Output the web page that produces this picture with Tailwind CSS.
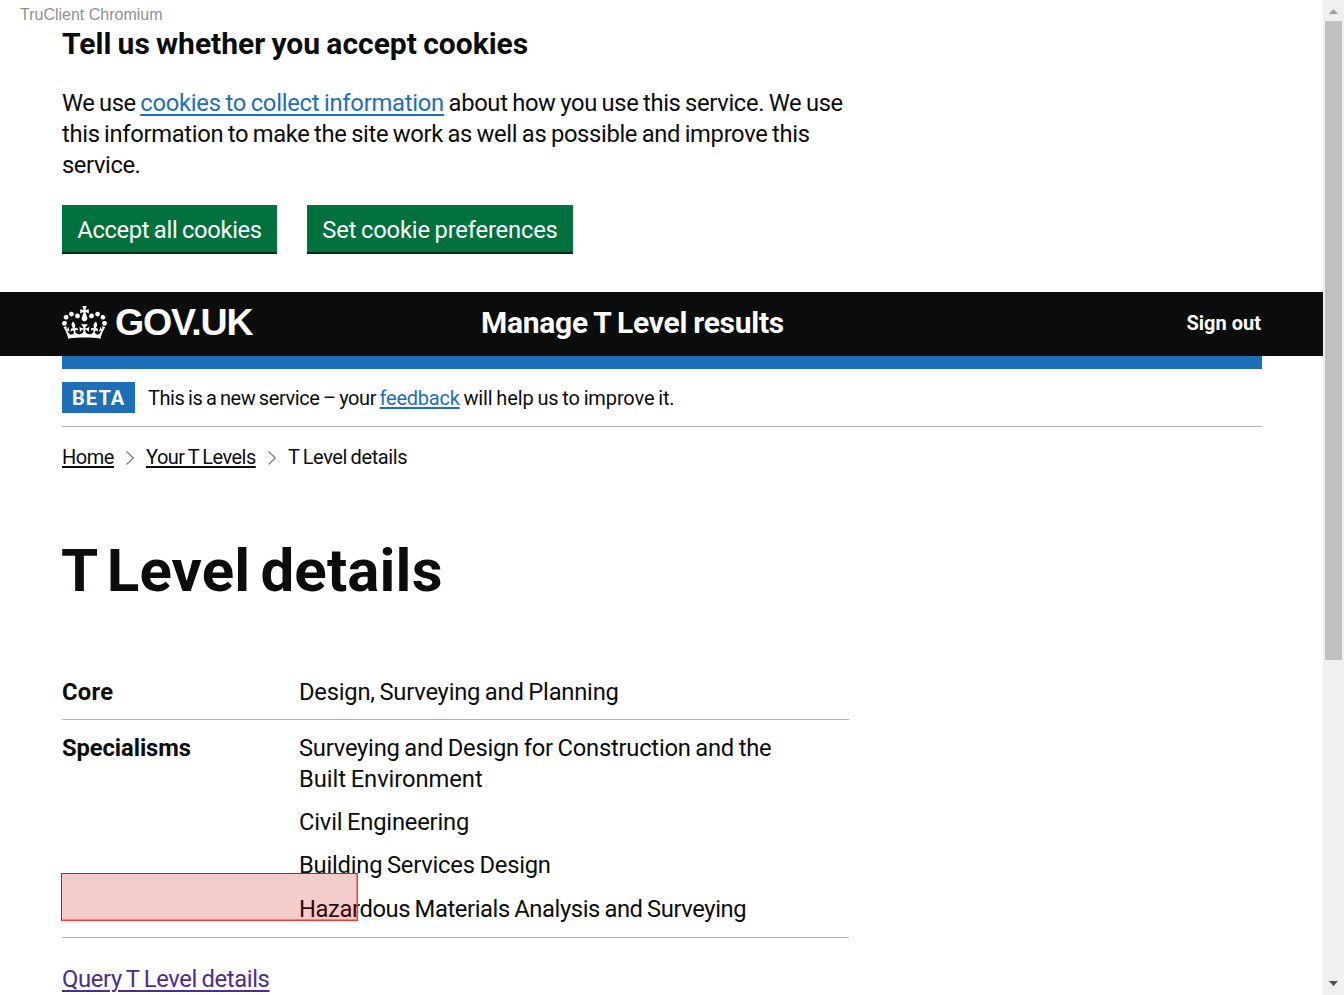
<!DOCTYPE html>
<html lang="en">
<head>
<meta charset="utf-8">
<title>T Level details – Manage T Level results – GOV.UK</title>
<script src="https://cdn.jsdelivr.net/npm/@tailwindcss/browser@4"></script>
</head>
<body class="relative flex h-[995px] overflow-hidden bg-white font-['Roboto','Noto_Sans',sans-serif] text-[23.75px] leading-[31.25px] text-[#0b0c0c]">
<div class="absolute left-5 top-[5px] font-['Liberation_Sans',sans-serif] text-base leading-[19px] whitespace-nowrap text-[#919191]">TruClient Chromium</div>
<div class="flex h-full w-[1323px] shrink-0 flex-col">
  <section class="h-[292px] shrink-0 px-[62px] pt-[25px]">
    <h2 class="text-[30px] leading-[37.5px] font-bold [word-spacing:-1.2px]">Tell us whether you accept cookies</h2>
    <p class="mt-[25px] whitespace-nowrap tracking-[-0.33px] [word-spacing:-1px]"><span class="tracking-[-0.4px]">We use </span><a class="tracking-[-0.24px] text-[#1d70b8] underline decoration-2 underline-offset-[3px] [text-decoration-skip-ink:none]">cookies to collect information</a> about how you use this service. We use<br>this information to make the site work as well as possible and improve this<br><span class="tracking-[-0.4px]">service.</span></p>
    <div class="mt-6 flex gap-[30px] whitespace-nowrap text-white">
      <button class="h-[49px] w-[215px] border-b-[2.5px] border-[#002d18] bg-[#00703c] pt-[3px] tracking-[-0.33px] [word-spacing:-1px]">Accept all cookies</button>
      <button class="h-[49px] w-[266px] border-b-[2.5px] border-[#002d18] bg-[#00703c] pt-[3px] tracking-[-0.18px] [word-spacing:-1px]">Set cookie preferences</button>
    </div>
  </section>
  <header class="flex h-16 shrink-0 items-center bg-[#0b0c0c] px-[62px] font-bold whitespace-nowrap text-white">
    <svg class="-mt-[3px] h-[33px] w-[45px]" viewBox="0 0 132 97" fill="#fff"><path fill-rule="evenodd" d="M25 30.2c3.5 1.5 7.7-.2 9.1-3.7 1.5-3.6-.2-7.8-3.9-9.2-3.6-1.4-7.6.3-9.1 3.9-1.4 3.5.3 7.5 3.9 9M9 39.5c3.6 1.5 7.8-.2 9.2-3.7 1.5-3.6-.2-7.8-3.9-9.1-3.6-1.5-7.6.2-9.1 3.8-1.4 3.5.3 7.5 3.8 9M4.4 57.2c3.5 1.5 7.7-.2 9.1-3.8 1.5-3.6-.2-7.7-3.9-9.1-3.5-1.5-7.6.3-9.1 3.8-1.4 3.5.3 7.6 3.9 9.1m38.3-21.4c3.5 1.5 7.7-.2 9.1-3.8 1.5-3.6-.2-7.7-3.9-9.1-3.6-1.5-7.6.3-9.1 3.8-1.3 3.6.4 7.7 3.9 9.1m64.4-5.6c-3.6 1.5-7.8-.2-9.1-3.7-1.5-3.6.2-7.8 3.8-9.2 3.6-1.4 7.7.3 9.2 3.9 1.3 3.5-.4 7.5-3.9 9m15.9 9.3c-3.6 1.5-7.7-.2-9.1-3.7-1.5-3.6.2-7.8 3.7-9.1 3.6-1.5 7.7.2 9.2 3.8 1.5 3.5-.3 7.5-3.8 9m4.7 17.7c-3.6 1.5-7.8-.2-9.2-3.8-1.5-3.6.2-7.7 3.9-9.1 3.6-1.5 7.7.3 9.2 3.8 1.3 3.5-.4 7.6-3.9 9.1M89.3 35.8c-3.6 1.5-7.8-.2-9.2-3.8-1.4-3.6.2-7.7 3.9-9.1 3.6-1.5 7.7.3 9.2 3.8 1.4 3.6-.3 7.7-3.9 9.1M69.7 17.7l8.9 4.7V9.3l-8.9 2.8c-.2-.3-.5-.6-.9-.9L72.4 0H59.6l3.5 11.2c-.3.3-.6.5-.9.9l-8.8-2.8v13.1l8.8-4.7c.3.3.6.7.9.9l-5 15.4v.1c-.2.8-.4 1.6-.4 2.4 0 4.1 3.1 7.5 7 8.1h.2c.3 0 .7.1 1 .1.4 0 .7 0 1-.1h.2c4-.6 7.1-4.1 7.1-8.1 0-.8-.1-1.7-.4-2.4V34l-5.1-15.4c.4-.2.7-.6 1-.9M66 92.8c16.900 0 32.800 1.100 47.100 3.200 4-16.900 8.900-26.700 14-33.500l-9.600-3.400c1 4.900 1.100 7.200 0 10.200-1.500-1.400-3-4.300-4.200-8.700L108.600 76c2.800-2 5-3.200 7.500-3.300-4.400 9.400-10 11.900-13.600 11.200-4.300-.8-6.300-4.600-5.600-7.900 1-4.700 5.700-5.900 8-.5 4.300-8.700-3-11.400-7.600-8.800 7.100-7.200 7.900-13.500 2.100-21.100-8 6.100-8.100 12.300-4.500 20.800-4.700-5.400-12.100-2.500-9.500 6.200 3.400-5.200 7.900-2 7.200 3.100-.6 4.300-6.400 7.800-13.500 7.200-10.300-.9-10.900-8-11.200-13.800 2.500-.5 7.100 1.800 11 7.300L80.200 60c-4.100 4.400-8 5.300-12.300 5.400 1.400-4.400 8-11.600 8-11.600H55.500s6.400 7.200 7.900 11.600c-4.200-.1-8-1-12.300-5.400l1.400 16.400c3.900-5.500 8.500-7.700 10.900-7.300-.3 5.800-.9 12.800-11.100 13.800-7.200.6-12.900-2.900-13.500-7.200-.7-5 3.800-8.300 7.100-3.100 2.700-8.700-4.600-11.600-9.400-6.200 3.700-8.500 3.600-14.700-4.600-20.800-5.800 7.600-5 13.900 2.200 21.100-4.700-2.600-11.900.1-7.700 8.800 2.300-5.500 7.100-4.200 8.100.5.700 3.300-1.300 7.100-5.700 7.900-3.500.7-9-1.800-13.500-11.200 2.500.1 4.700 1.300 7.500 3.300l-4.700-15.400c-1.200 4.400-2.700 7.200-4.300 8.700-1.100-3-.9-5.300 0-10.200l-9.500 3.400c5 6.900 9.900 16.700 14 33.500 14.800-2.100 30.800-3.200 47.700-3.200"/></svg>
    <span class="-mt-1 ml-2 w-[366px] font-['Liberation_Sans',sans-serif] text-[37.5px] leading-10 tracking-[-1.2px]">GOV.UK</span>
    <span class="-mt-0.5 text-[30px] leading-9 tracking-[-0.27px] [word-spacing:-1px]">Manage T Level results</span>
    <span class="ml-auto text-[20px]">Sign out</span>
  </header>
  <main class="px-[62px]">
    <div class="h-[13px] w-[1200px] bg-[#1d70b8]"></div>
    <div class="flex h-[58px] w-[1200px] items-start border-b border-[#b1b4b6] pt-[13px] text-[20px] whitespace-nowrap">
      <strong class="h-[31px] w-[73px] bg-[#1d70b8] pl-[10px] leading-[32px] tracking-[1.1px] text-white">BETA</strong>
      <span class="ml-[13px] leading-[32px] tracking-[-0.42px] [word-spacing:-1px]">This is a new service – your <a class="tracking-[-0.24px] text-[#1d70b8] underline decoration-2 underline-offset-[2px] [text-decoration-skip-ink:none]">feedback</a><span class="tracking-[-0.13px]"> will help us to improve it.</span></span>
    </div>
    <nav class="mt-[18px] flex h-[25px] items-center text-[20px] leading-[25px] whitespace-nowrap [word-spacing:-1px]">
      <a class="w-[52px] tracking-[-0.46px] underline decoration-2 underline-offset-[2px]">Home</a>
      <svg class="mx-3 h-4 w-2 shrink-0" viewBox="0 0 8 16" fill="none" stroke="#7b7f81" stroke-width="1.2"><path d="M.5 1.500 7.300 8 .5 14.500"/></svg>
      <a class="w-[110px] tracking-[-0.5px] underline decoration-2 underline-offset-[2px]">Your T Levels</a>
      <svg class="mx-3 h-4 w-2 shrink-0" viewBox="0 0 8 16" fill="none" stroke="#7b7f81" stroke-width="1.2"><path d="M.5 1.500 7.300 8 .5 14.500"/></svg>
      <span class="tracking-[-0.4px]">T Level details</span>
    </nav>
    <h1 class="mt-[66px] -ml-px h-[70px] text-[60px] leading-[70px] font-bold tracking-[0.150px] whitespace-nowrap [word-spacing:-5px]">T Level details</h1>
    <dl class="mt-[70px] w-[787px] whitespace-nowrap [word-spacing:-1px]">
      <div class="flex h-[44px] border-b border-[#b1b4b6] pt-px">
        <dt class="w-[237px] font-bold tracking-[0.3px]">Core</dt>
        <dd class="tracking-[-0.22px]">Design, Surveying and Planning</dd>
      </div>
      <div class="flex h-[218px] border-b border-[#b1b4b6] pt-[12.5px]">
        <dt class="w-[237px] font-bold tracking-[-0.08px]">Specialisms</dt>
        <dd>
          <p class="mb-3"><span class="tracking-[-0.23px]">Surveying and Design for Construction and the</span><br><span class="tracking-[-0.07px]">Built Environment</span></p>
          <p class="mb-3 tracking-[-0.2px]">Civil Engineering</p>
          <p class="mb-3 tracking-[-0.22px]">Building Services Design</p>
          <p class="tracking-[-0.4px]">Hazardous Materials Analysis and Surveying</p>
        </dd>
      </div>
    </dl>
    <p class="mt-[26px]"><a class="tracking-[-0.35px] text-[#4c2c92] underline decoration-2 underline-offset-[3px] [word-spacing:-1px]">Query T Level details</a></p>
  </main>
</div>
<div class="absolute left-[61px] top-[873px] h-[48px] w-[297px] border border-[#ff3333] border-t-[#f00] border-l-[#f00] bg-[#cc0000]/20 shadow-[inset_-1px_-1px_0_#ff000060]"></div>
<div class="flex h-full w-[21px] shrink-0 flex-col items-center bg-[#f0f0f0]">
  <svg class="h-[21px] w-[17px] shrink-0" viewBox="0 0 17 21" fill="#a0a0a0"><path d="M4 14 8.500 9 13 14z"/></svg>
  <div class="h-[639px] w-[17px] shrink-0 bg-[#c1c1c1]"></div>
  <svg class="mt-auto h-[21px] w-[17px] shrink-0" viewBox="0 0 17 21" fill="#505050"><path d="M4 7h9l-4.500 5z"/></svg>
</div>
</body>
</html>
